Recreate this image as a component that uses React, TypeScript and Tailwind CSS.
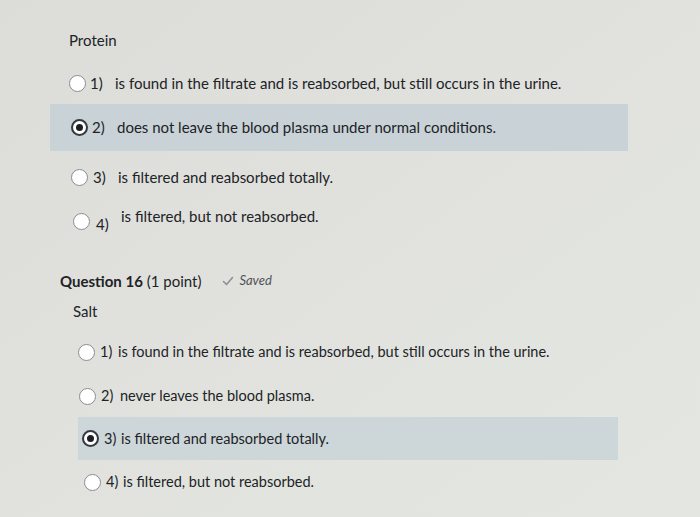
import React from 'react';

function Radio({ checked }: { checked?: boolean }) {
  return checked ? (
    <span className="flex h-[17px] w-[17px] shrink-0 items-center justify-center rounded-full border-2 border-[#34393d] bg-white">
      <span className="h-[7px] w-[7px] rounded-full bg-[#1c1f22]" />
    </span>
  ) : (
    <span className="h-[17px] w-[17px] shrink-0 rounded-full border border-[#8a8d90] bg-white" />
  );
}

export default function App() {
  return (
    <div
      className="h-[517px] w-[700px] overflow-hidden bg-gradient-to-br from-[#dcdcd9] via-[#e1e2de] to-[#e4e7e1] text-[15px] text-[#202326]"
      style={{ fontFamily: 'Lato, "Open Sans", sans-serif' }}
    >
      <div className="h-[62px] pl-[69px] pt-[30px] leading-[20px]">Protein</div>

      <div className="flex h-[42px] items-center pl-[69px]">
        <Radio />
        <span className="ml-[4px] w-[25px]">1)</span>
        <span>is found in the filtrate and is reabsorbed, but still occurs in the urine.</span>
      </div>

      <div className="ml-[50px] flex h-[47px] w-[578px] items-center bg-[#c8d2d7] pl-[21px]">
        <Radio checked />
        <span className="ml-[4px] w-[25px]">2)</span>
        <span>does not leave the blood plasma under normal conditions.</span>
      </div>

      <div className="flex h-[52px] items-center pl-[71px]">
        <Radio />
        <span className="ml-[5px] w-[25px]">3)</span>
        <span>is filtered and reabsorbed totally.</span>
      </div>

      <div className="flex h-[36px] items-center pl-[73px]">
        <Radio />
        <span className="ml-[6px] mt-[6px] w-[25px]">4)</span>
        <span className="-mt-[10px]">is filtered, but not reabsorbed.</span>
      </div>

      <div className="mt-[28px] flex h-[28px] items-center pl-[60px]">
        <span>
          <span className="font-bold">Question 16</span> (1 point)
        </span>
        <span className="ml-[21px] flex items-center gap-[5px] text-[13px] italic text-[#4f5357]">
          <svg width="12" height="10" viewBox="0 0 12 10" fill="none" stroke="#8b9096" strokeWidth="1.6" strokeLinecap="round" strokeLinejoin="round">
            <path d="M1.5 5.5 L4.5 8.5 L10.5 1.5" />
          </svg>
          Saved
        </span>
      </div>

      <div className="flex h-[32px] items-center pl-[73px]">Salt</div>

      <div className="flex h-[50px] items-center pl-[78px] text-[14.5px]">
        <Radio />
        <span className="ml-[5px] w-[18px]">1)</span>
        <span>is found in the filtrate and is reabsorbed, but still occurs in the urine.</span>
      </div>

      <div className="flex h-[38px] items-center pl-[79px] text-[14.5px]">
        <Radio />
        <span className="ml-[5px] w-[19px]">2)</span>
        <span>never leaves the blood plasma.</span>
      </div>

      <div className="ml-[78px] mt-[2px] flex h-[43px] w-[540px] items-center bg-[#cdd6d9] pl-[4px] text-[14.5px]">
        <Radio checked />
        <span className="ml-[5px] w-[17px]">3)</span>
        <span>is filtered and reabsorbed totally.</span>
      </div>

      <div className="flex h-[44px] items-center pl-[84px] text-[14.5px]">
        <Radio />
        <span className="ml-[5px] w-[17px]">4)</span>
        <span>is filtered, but not reabsorbed.</span>
      </div>
    </div>
  );
}
